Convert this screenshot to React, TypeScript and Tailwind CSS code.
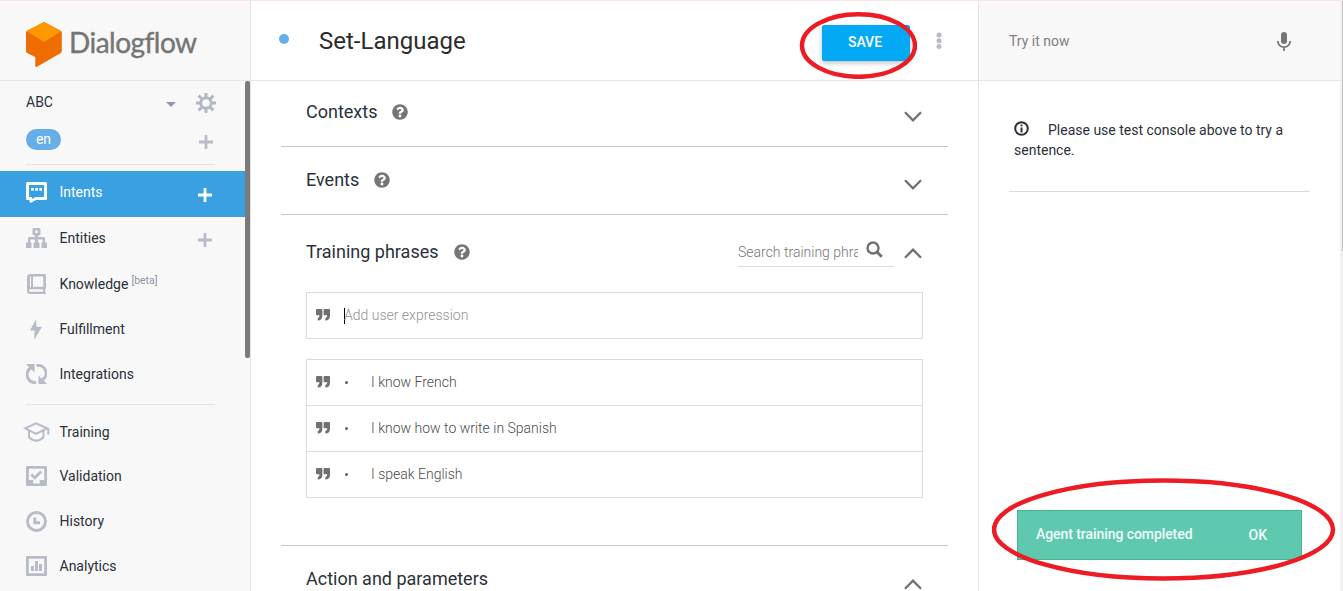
import React from "react";

type IconProps = { className?: string };

const Plus = ({ className = "" }: IconProps) => (
  <svg viewBox="0 0 14 14" className={`size-3.5 ${className}`} fill="none" stroke="currentColor" strokeWidth="2.8">
    <path d="M7 0v14M0 7h14" />
  </svg>
);

const Chevron = ({ up = false }: { up?: boolean }) => (
  <svg viewBox="0 0 18 11" className={`h-[11px] w-[18px] text-[#707070] ${up ? "rotate-180" : ""}`} fill="none" stroke="currentColor" strokeWidth="2.3">
    <path d="M1 1.300l8 8L17 1.300" />
  </svg>
);

const Help = () => (
  <svg viewBox="0 0 512 512" className="size-4 shrink-0 text-[#757575]" fill="currentColor">
    <path d="M504 256c0 137-111 248-248 248S8 393 8 256 119 8 256 8s248 111 248 248zM262.700 90c-54.500 0-89.300 23-116.500 63.800-3.500 5.300-2.400 12.400 2.700 16.300l34.700 26.300c5.200 3.900 12.600 3 16.700-2.100 17.900-22.700 30.100-35.800 57.300-35.800 20.400 0 45.700 13.100 45.700 33 0 15-12.400 22.700-32.500 34C247 238.500 216 254.900 216 296v4c0 6.600 5.400 12 12 12h56c6.600 0 12-5.400 12-12v-1.300c0-28.500 83.200-29.600 83.200-106.700 0-58-60.200-102-116.500-102zM256 338c-25.400 0-46 20.600-46 46s20.600 46 46 46 46-20.600 46-46-20.600-46-46-46z" />
  </svg>
);

const Quote = () => (
  <svg viewBox="0 0 14 12" className="mb-0.5 h-3 w-3.5 shrink-0 text-[#707070]" fill="currentColor">
    <path d="M1 0h4.400q1 0 1 1v5.500q0 5-4.700 5V9.300Q3.500 9 3.500 6.300H1q-1 0-1-1V1q0-1 1-1zM8.600 0H13q1 0 1 1v5.500q0 5-4.700 5V9.300q2-.3 2-3H8.600q-1 0-1-1V1q0-1 1-1z" />
  </svg>
);

const Logo = () => (
  <svg viewBox="0 0 36 46" className="h-[46px] w-9">
    <path d="M18 0l16.800 8.700q1 .6 1 1.800v18.600q0 1.300-1 1.900L11 44.800q-1.700.8-1.700-1V35L1.100 31Q0 30.400 0 29.100V10.500q0-1.200 1-1.800z" fill="#ef6c00" />
    <path d="M17 .5q1-.6 2 0l16.300 8.700L18 20 .7 9.200z" fill="#ff9800" />
  </svg>
);

const Gear = () => (
  <svg viewBox="-10 -10 20 20" className="size-5 text-[#b1b7c3]" fill="none" stroke="currentColor">
    <circle r="5.300" strokeWidth="2.900" />
    <path strokeWidth="2.900" d="M0-6V-10M0 6v4M-6 0h-4M6 0h4M-4.300-4.300L-7.400-7.400M4.300-4.300L7.400-7.400M-4.300 4.300L-7.400 7.400M4.300 4.300L7.400 7.400" />
  </svg>
);

const Intents = () => (
  <svg viewBox="0 0 21 21" className="mb-1 size-[21px]">
    <path fill="currentColor" fillRule="evenodd" d="M1.500 0h18q1.500 0 1.500 1.500v15q0 1.500-1.500 1.500H10l-4.500 2.500q-1.500.6-2-1V18H1.500Q0 18 0 16.500v-15Q0 0 1.500 0zM3 3v12h3v2l3.500-2H18V3zM5 6h2.700v2.800H5zm4.200 0h2.600v2.800H9.200zm4.100 0H16v2.800h-2.700z" />
  </svg>
);

const Entities = () => (
  <svg viewBox="0 0 21 20" className="mb-1 h-5 w-[21px]">
    <path fill="currentColor" fillRule="evenodd" d="M8 0h5q1.500 0 1.500 1.500V6q0 1.500-1.500 1.500h-1V9h5.500Q19 9 19 10.500V14q2 0 2 2v4h-5.500v-4q0-2 1.200-2v-2.500H12V14q1.500.3 1.500 2v4h-6v-4q0-1.700 1.500-2v-2.500H4.300V14q1.200 0 1.200 2v4H0v-4q0-2 2-2v-3.500Q2 9 3.500 9H9V7.500H8Q6.500 7.500 6.500 6V1.500Q6.500 0 8 0zM9.200 2.500V5h2.600V2.500z" />
  </svg>
);

const Knowledge = () => (
  <svg viewBox="0 0 19 20" className="mb-0.5 h-5 w-[19px]">
    <path fill="currentColor" fillRule="evenodd" d="M3 0h14.500Q19 0 19 1.500V14q0 .8-.8 1v3q.8 0 .8 1t-1 1H3q-3 0-3-3V3q0-3 3-3zM6 2.500v10.300h10.300V2.500zM3 2.500v10.700h1V2.500zM3.300 15.200q-1.200.1-1.200 1.300t1.200 1.200H16v-2.500z" />
  </svg>
);

const Bolt = () => (
  <svg viewBox="0 0 12 21" className="h-[21px] w-3">
    <path fill="currentColor" d="M6.200 0L0 11.500h4.600L4.200 21 12 7.800H6.300z" />
  </svg>
);

const Integrations = () => (
  <svg viewBox="0 0 21 20" className="mb-0.5 h-5 w-[21px]" fill="none" stroke="currentColor" strokeWidth="3">
    <path d="M4.500 4A8 8 0 0 0 10 18.500M16.500 16A8 8 0 0 0 10.500 1.500" />
    <path d="M0 0h8.500v8.500L5.400 5.400zM21 20h-8.500v-8.500l3.100 3.100z" fill="currentColor" stroke="none" />
  </svg>
);

const Training = () => (
  <svg viewBox="0 0 27 20" className="mb-0.5 h-5 w-[27px]" fill="none" stroke="currentColor" strokeWidth="2">
    <path d="M2.200 6.300L13 1.300l11.200 5L13 11.800zM6 8.700v6.500q3.500 3.500 7.200 3.500t7.200-3.500V8.700M25.300 6.200v6.300" />
  </svg>
);

const Validation = () => (
  <svg viewBox="0 0 21 20" className="mb-0.5 h-5 w-[21px]">
    <path fill="currentColor" fillRule="evenodd" d="M1.500 0h18Q21 0 21 1.500v17q0 1.500-1.500 1.500h-18Q0 20 0 18.500v-17Q0 0 1.500 0zM2.800 2.700v11.200h4.400v3.600h6.600v-3.600h4.400V2.700z" />
    <path d="M5.300 8.500l3.400 3.300 6.500-6.200" fill="none" stroke="currentColor" strokeWidth="2.700" />
  </svg>
);

const History = () => (
  <svg viewBox="0 0 21 21" className="size-[21px]" fill="none" stroke="currentColor">
    <circle cx="10.500" cy="10.500" r="9" strokeWidth="2.900" />
    <path d="M8.800 6.500v5.200H14" strokeWidth="3" />
  </svg>
);

const Analytics = () => (
  <svg viewBox="0 0 21 20" className="mb-0.5 h-5 w-[21px]" fill="currentColor">
    <path fillRule="evenodd" d="M1 0h19q1 0 1 1v18q0 1-1 1H1q-1 0-1-1V1q0-1 1-1zM2.800 2.800v14.400h15.400V2.800zM5 10h3v5H5zm4-5h3v10H9zm4 3h3v7h-3z" />
  </svg>
);

function NavItem({ icon, label, cls, beta, labelCls = "mb-0.5" }: { icon: React.ReactNode; label: string; cls: string; beta?: boolean; labelCls?: string }) {
  return (
    <div className={`flex shrink-0 items-center ${cls}`}>
      <span className="flex w-[72px] shrink-0 justify-center text-[#b7bcc8]">{icon}</span>
      <span className={`-ml-[12.500px] text-[14px] leading-5 text-[#2b303b] ${labelCls}`}>{label}</span>
      {beta && <span className="mb-2 ml-[3px] text-[10.500px] leading-3 text-[#8e95a3]">[beta]</span>}
    </div>
  );
}

function Sidebar() {
  return (
    <aside className="relative flex w-[251px] shrink-0 flex-col border-r border-[#e5e5e5] bg-[#f8f8f8]">
      <div className="flex h-20 shrink-0 items-start border-b border-[#e5e5e5] pl-[26px] pt-[21px]">
        <Logo />
        <span className="ml-[7px] mt-0.5 font-['Lato'] text-[28px] leading-9 tracking-[-0.520px] text-[#757575] [-webkit-text-stroke:0.400px_#757575]">Dialogflow</span>
      </div>
      <div className="flex h-11 shrink-0 items-center pl-[26px] pr-[34px]">
        <span className="mb-0.5 flex-1 text-[14px] text-[#2b303b]">ABC</span>
        <svg viewBox="0 0 10 5" className="mr-5 mt-0.5 h-[5px] w-2.5 text-[#8d97ad]"><path fill="currentColor" d="M0 0h10L5 5z" /></svg>
        <Gear />
      </div>
      <div className="flex h-[39px] shrink-0 items-start pl-[26px] pr-[37px] pt-1">
        <span className="flex h-[21px] w-[35px] items-center justify-center rounded-full bg-[#66aee8] text-[14px] text-white">en</span>
        <Plus className="ml-auto mt-1.5 text-[#b7bcc8]" />
      </div>
      <div className="ml-[26px] h-px w-[189px] shrink-0 bg-[#e3e3e3]" />
      <div className="mt-1.5 flex h-[46px] w-[245px] shrink-0 items-center bg-[#39a0e2] text-white">
        <span className="ml-[26px] w-[33.500px]"><Intents /></span>
        <span className="mb-1 text-[14px] leading-5">Intents</span>
        <Plus className="ml-auto mr-[33px] mt-px" />
      </div>
      <div className="flex h-[45px] w-[245px] shrink-0 items-center">
        <NavItem icon={<Entities />} label="Entities" cls="h-[45px]" labelCls="mb-1" />
        <Plus className="ml-auto mr-[33px] mt-px text-[#b7bcc8]" />
      </div>
      <NavItem icon={<Knowledge />} label="Knowledge" beta cls="h-[45px]" />
      <NavItem icon={<Bolt />} label="Fulfillment" cls="h-[45px]" />
      <NavItem icon={<Integrations />} label="Integrations" cls="h-[45px]" />
      <div className="ml-[26px] mt-[7px] h-px w-[189px] shrink-0 bg-[#e3e3e3]" />
      <NavItem icon={<Training />} label="Training" cls="mt-[5px] h-[45px]" />
      <NavItem icon={<Validation />} label="Validation" cls="h-11" />
      <NavItem icon={<History />} label="History" cls="h-[45px]" />
      <NavItem icon={<Analytics />} label="Analytics" cls="h-[45px]" />
      <div className="absolute left-[245px] top-20 h-[277px] w-[5px] rounded-[2px] bg-[#7a7a7a]" />
    </aside>
  );
}

function Section({ title, help = true, up, cls = "", chevronCls = "mt-2.5", children }: { title: string; help?: boolean; up?: boolean; cls?: string; chevronCls?: string; children?: React.ReactNode }) {
  return (
    <div className={`flex items-center pl-[25px] pr-[26px] ${cls}`}>
      <h2 className="text-[18px] leading-6 text-[#2b303b]">{title}</h2>
      {help && <span className="ml-[15px]"><Help /></span>}
      <div className="ml-auto flex items-center">
        {children}
        <span className={chevronCls}><Chevron up={up} /></span>
      </div>
    </div>
  );
}

const phrases = ["I know French", "I know how to write in Spanish", "I speak English"];

function Main() {
  return (
    <main className="flex min-w-0 flex-1 flex-col bg-white">
      <header className="flex h-20 shrink-0 items-center border-b border-[#e5e5e5] pl-7">
        <span className="mb-1 size-2.5 rounded-full bg-[#66aee8]" />
        <h1 className="ml-[30px] text-[24px] text-[#2b2b2b]">Set-Language</h1>
        <div className="relative ml-auto mr-[26px]">
          <button className="mt-1 block h-9 w-[88px] rounded-[2px] bg-[#03a9f4] pr-0.5 text-[14px] font-medium text-white shadow-[0_2px_5px_rgba(0,0,0,0.260)]">SAVE</button>
          <svg viewBox="0 0 118 68" className="absolute -left-[23px] -top-[14px] mt-1 h-[68px] w-[118px]">
            <ellipse cx="59.500" cy="34.500" rx="56.500" ry="31.300" fill="none" stroke="#ed1c24" strokeWidth="4.500" />
          </svg>
        </div>
        <svg viewBox="0 0 6 18" className="mr-9 h-[18px] w-1.5 text-[#b7bcc8]" fill="currentColor">
          <circle cx="3" cy="3" r="2.500" /><circle cx="3" cy="8.700" r="2.500" /><circle cx="3" cy="14.500" r="2.500" />
        </svg>
      </header>
      <div className="ml-[30px] w-[667px]">
        <Section title="Contexts" cls="h-[66px] border-b border-[#c9c5c5] pb-1" />
        <Section title="Events" cls="h-[68px] border-b border-[#c9c5c5] pb-0.5" />
        <Section title="Training phrases" up cls="h-[77px] pb-1" chevronCls="mt-1">
          <div className="mr-[10px] mt-0.5 flex h-7 w-[156px] items-center border-b border-[#dcdcdc]">
            <input className="w-[120px] bg-transparent text-[14px] font-light outline-none placeholder:text-[#757575]" placeholder="Search training phrases" />
            <svg viewBox="0 0 17 17" className="mb-1.5 ml-2 size-[17px] text-[#707070]" fill="none" stroke="currentColor">
              <circle cx="7" cy="7" r="5.500" strokeWidth="2.400" /><path d="M11 11l4.800 4.800" strokeWidth="2.800" />
            </svg>
          </div>
        </Section>
        <div className="ml-[25px] flex h-[47px] w-[617px] items-center border border-[#dcdcdc] pl-[9px]">
          <Quote />
          <span className="ml-3.5 h-4 w-px bg-black" />
          <span className="-ml-px text-[14px] font-light text-[#929292]">Add user expression</span>
        </div>
        <div className="ml-[25px] mt-5 w-[617px] border border-b-0 border-[#dcdcdc]">
          {phrases.map((p) => (
            <div key={p} className="flex h-[46px] items-center border-b border-[#dcdcdc] pl-[9px]">
              <Quote />
              <span className="ml-[15px] size-[3px] rounded-full bg-[#606060]" />
              <span className="ml-[23px] text-[14px] font-light text-[#4c4c4c]">{p}</span>
            </div>
          ))}
        </div>
        <div className="mt-[47px] border-t border-[#c9c5c5]">
          <Section title="Action and parameters" help={false} up cls="h-[66px]" />
        </div>
      </div>
    </main>
  );
}

function Console() {
  return (
    <aside className="relative flex w-[362px] shrink-0 flex-col border-l border-[#e0e0e0] bg-white">
      <header className="flex h-20 shrink-0 items-center justify-between border-b border-[#e5e5e5] bg-[#f8f8f8] pl-[30px] pr-[49px]">
        <span className="mt-0.5 text-[14px] text-[#808080]">Try it now</span>
        <svg viewBox="0 0 14 19" className="mt-0.5 h-[19px] w-3.5 text-[#757575]">
          <rect x="4" width="6" height="12" rx="3" fill="currentColor" />
          <path d="M.8 9a6.200 6.200 0 0 0 12.400 0M7 15v4" fill="none" stroke="currentColor" strokeWidth="1.700" />
        </svg>
      </header>
      <div className="ml-[30px] h-[111px] w-[301px] border-b border-[#dcdcdc] pl-[5px] pt-[39px]">
        <p className="text-[14px] leading-5 text-[#2b303b]">
          <svg viewBox="0 0 15 15" className="mr-[19px] inline size-[15px] align-[-1px]" fill="none" stroke="currentColor">
            <circle cx="7.500" cy="7.500" r="6.300" strokeWidth="2" /><path d="M7.500 3.400v1.800M7.500 6.500v5" strokeWidth="2" />
          </svg>
          Please use test console above to try a sentence.
        </p>
      </div>
      <div className="absolute left-[38px] top-[509px] flex h-[50px] w-[285px] items-center border border-[#42b58e] bg-[#5fc9b0] pl-[18px] pr-[34px] text-[14px] font-medium text-white/90">
        <span className="mb-0.5 tracking-[-0.070px]">Agent training completed</span>
        <span className="ml-auto">OK</span>
      </div>
      <svg viewBox="0 0 344 104" className="absolute left-[13px] top-[476px] h-[104px] w-[344px]">
        <ellipse cx="171.500" cy="52.500" rx="169.500" ry="49" fill="none" stroke="#ed1c24" strokeWidth="4.500" />
      </svg>
    </aside>
  );
}

export default function App() {
  return (
    <div className="flex h-[591px] w-[1343px] overflow-hidden border-t border-[#fbe4e4] bg-white font-['Roboto',sans-serif]">
      <Sidebar />
      <Main />
      <Console />
      <div className="flex w-[3px] shrink-0 justify-end bg-[#f1f1f1]">
        <div className="h-[250px] w-px bg-[#c1c1c1]" />
      </div>
    </div>
  );
}
